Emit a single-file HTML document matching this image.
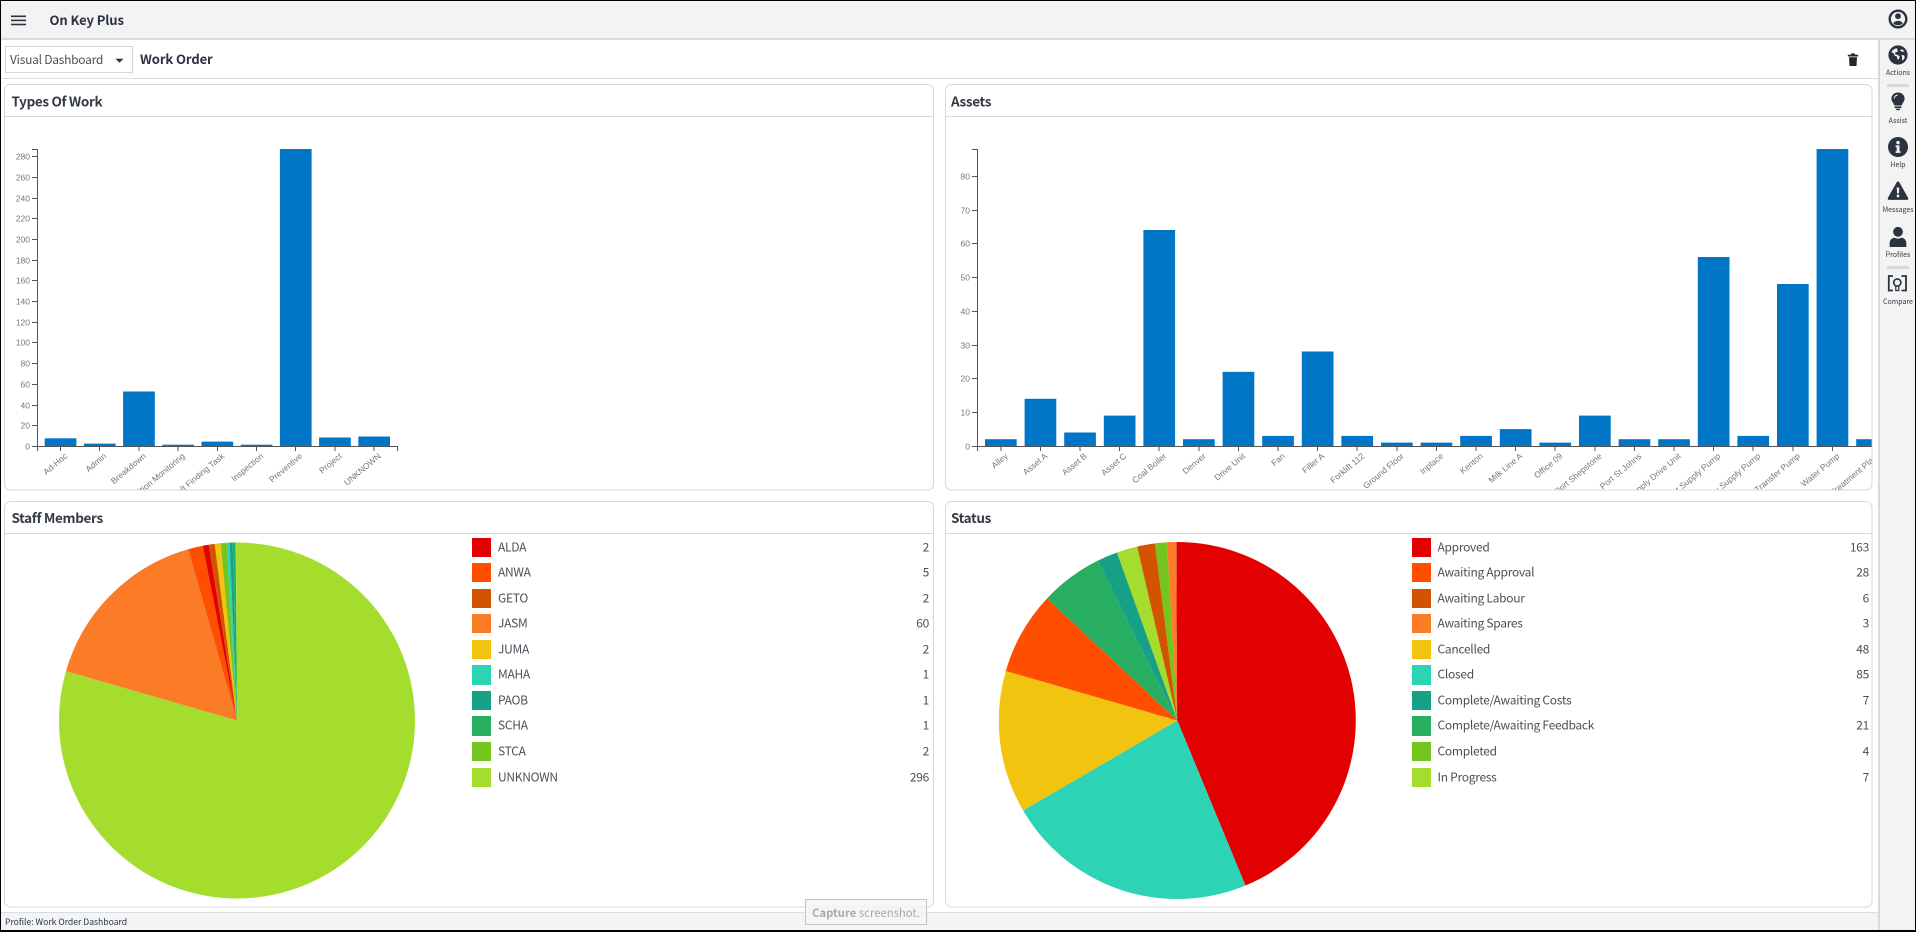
<!DOCTYPE html>
<html lang="en">
<head>
<meta charset="utf-8">
<title>On Key Plus</title>
<style>
html,body{margin:0;padding:0;background:#fff;width:1916px;height:932px;overflow:hidden}
svg{display:block;position:absolute;left:0;top:0}
text{font-family:"Noto Sans CJK JP","Liberation Sans",sans-serif}
.h{font-size:13.5px;font-weight:700;fill:#333a45;letter-spacing:-.35px}
.ax text{font-family:"Liberation Sans",sans-serif;font-size:8.5px;fill:#777}
.yt text{text-anchor:end}
.xl text{text-anchor:end;font-size:8.5px}
.lg text{font-size:12px;fill:#4a4f58;letter-spacing:-.28px;transform:translate(0,-.7px)}
.lg .v{text-anchor:end}
.sb text{font-size:7px;fill:#333a45;text-anchor:middle}
.bar rect{fill:#0276c6}
.axl{stroke:#555;stroke-width:1;fill:none}
.card{fill:#fff;stroke:#d8d8d8;stroke-width:1}
.hl{stroke:#d8d8d8;stroke-width:1}
.pie circle{fill:none}
</style>
</head>
<body>
<svg width="1916" height="932" viewBox="0 0 1916 932" xmlns="http://www.w3.org/2000/svg">
<defs>
<clipPath id="c1"><rect x="5" y="117" width="928" height="372.5"/></clipPath>
<clipPath id="c2"><rect x="946" y="117" width="925.6" height="372.5"/></clipPath>
</defs>

<!-- chrome -->
<rect x="0" y="0" width="1916" height="932" fill="#fff"/>
<rect x="1" y="1" width="1914" height="37" fill="#f3f3f3"/>
<rect x="1878" y="38" width="37" height="892" fill="#f3f3f3"/>
<rect x="1" y="38" width="1914" height="2" fill="#d9d9d9"/>
<rect x="1878" y="38" width="2" height="892" fill="#d9d9d9"/>
<rect x="1" y="78" width="1877" height="1" fill="#dcdcdc"/>
<rect x="1" y="912" width="1877" height="18" fill="#f3f4f6"/>
<rect x="1" y="912" width="1877" height="1" fill="#dcdcdc"/>

<!-- hamburger -->
<rect x="11" y="15.5" width="15" height="1.6" fill="#2b3240"/>
<rect x="11" y="19.6" width="15" height="1.6" fill="#2b3240"/>
<rect x="11" y="23.7" width="15" height="1.6" fill="#2b3240"/>
<text x="49.5" y="25" font-size="13" font-weight="700" fill="#2b3240" letter-spacing="-.1">On Key Plus</text>

<!-- toolbar -->
<rect x="5.5" y="46.5" width="127" height="26" fill="#fff" stroke="#d5d5d5"/>
<text x="10" y="64" font-size="12" fill="#4a4f58" letter-spacing="-.25">Visual Dashboard</text>
<path d="M115.5 58.8h8l-4 4z" fill="#2b3240"/>
<text x="140" y="64" font-size="13" font-weight="700" fill="#2b3240" letter-spacing="-.1">Work Order</text>
<path d="M1847.8 54.8h3l.7-1.4h3l.7 1.4h3v1.7h-10.4zM1849 57.3h8l-.5 8.7h-7z" fill="#20262e"/>

<!-- cards -->
<rect class="card" x="4.5" y="84.5" width="929" height="405.5" rx="6"/>
<rect class="card" x="945.5" y="84.5" width="926.5" height="405.5" rx="6"/>
<rect class="card" x="4.5" y="501.5" width="929" height="405.5" rx="6"/>
<rect class="card" x="945.5" y="501.5" width="926.5" height="405.5" rx="6"/>
<line class="hl" x1="5" y1="116.5" x2="933" y2="116.5"/>
<line class="hl" x1="946" y1="116.5" x2="1872" y2="116.5"/>
<line class="hl" x1="5" y1="533.5" x2="933" y2="533.5"/>
<line class="hl" x1="946" y1="533.5" x2="1872" y2="533.5"/>
<text class="h" x="11.5" y="106.5">Types Of Work</text>
<text class="h" x="951" y="106.5">Assets</text>
<text class="h" x="11.5" y="523">Staff Members</text>
<text class="h" x="951" y="523">Status</text>

<!-- Types chart -->
<g clip-path="url(#c1)">
<g class="bar">
<rect x="44.7" y="438.3" width="31.7" height="7.7"/>
<rect x="83.9" y="443.6" width="31.7" height="2.4"/>
<rect x="123.1" y="391.5" width="31.7" height="54.5"/>
<rect x="162.3" y="444.7" width="31.7" height="1.3"/>
<rect x="201.5" y="441.6" width="31.7" height="4.4"/>
<rect x="240.7" y="444.7" width="31.7" height="1.3"/>
<rect x="279.9" y="149" width="31.7" height="297"/>
<rect x="319.1" y="437.5" width="31.7" height="8.5"/>
<rect x="358.3" y="436.5" width="31.7" height="9.5"/>
</g>
<path class="axl" d="M32 149.5h5.5V446.5H32M37.5 446.5H397.5V451M37.5 446.5V451"/>
<path class="axl" d="M32 156.5h5M32 177.5h5M32 198.5h5M32 218.5h5M32 239.5h5M32 260.5h5M32 280.5h5M32 301.5h5M32 322.5h5M32 342.5h5M32 363.5h5M32 384.5h5M32 405.5h5M32 425.5h5"/>
<path class="axl" d="M60.5 447v4M99.5 447v4M139 447v4M178 447v4M217.5 447v4M256.5 447v4M295.5 447v4M335 447v4M374 447v4"/>
<g class="ax yt">
<text x="30" y="159.5">280</text><text x="30" y="180.5">260</text><text x="30" y="201.5">240</text><text x="30" y="221.5">220</text><text x="30" y="242.5">200</text><text x="30" y="263.5">180</text><text x="30" y="283.5">160</text><text x="30" y="304.5">140</text><text x="30" y="325.5">120</text><text x="30" y="345.5">100</text><text x="30" y="366.5">80</text><text x="30" y="387.5">60</text><text x="30" y="408.5">40</text><text x="30" y="428.5">20</text><text x="30" y="449.5">0</text>
</g>
<g class="ax xl">
<text transform="translate(68,457) rotate(-40)">Ad-Hoc</text>
<text transform="translate(107,457) rotate(-40)">Admin</text>
<text transform="translate(146.5,457) rotate(-40)">Breakdown</text>
<text transform="translate(185.5,457) rotate(-40)">Condition Monitoring</text>
<text transform="translate(225,457) rotate(-40)">Fault Finding Task</text>
<text transform="translate(264,457) rotate(-40)">Inspection</text>
<text transform="translate(303,457) rotate(-40)">Preventive</text>
<text transform="translate(342.5,457) rotate(-40)">Project</text>
<text transform="translate(381.5,457) rotate(-40)">UNKNOWN</text>
</g>
</g>

<!-- Assets chart -->
<g clip-path="url(#c2)">
<g class="bar">
<rect x="985" y="439.2" width="31.7" height="6.8"/>
<rect x="1024.6" y="398.8" width="31.7" height="47.2"/>
<rect x="1064.2" y="432.5" width="31.7" height="13.5"/>
<rect x="1103.8" y="415.6" width="31.7" height="30.4"/>
<rect x="1143.4" y="230" width="31.7" height="216"/>
<rect x="1183" y="439.2" width="31.7" height="6.8"/>
<rect x="1222.6" y="371.8" width="31.7" height="74.2"/>
<rect x="1262.2" y="435.9" width="31.7" height="10.1"/>
<rect x="1301.8" y="351.5" width="31.7" height="94.5"/>
<rect x="1341.4" y="435.9" width="31.7" height="10.1"/>
<rect x="1381" y="442.6" width="31.7" height="3.4"/>
<rect x="1420.6" y="442.6" width="31.7" height="3.4"/>
<rect x="1460.2" y="435.9" width="31.7" height="10.1"/>
<rect x="1499.8" y="429.1" width="31.7" height="16.9"/>
<rect x="1539.4" y="442.6" width="31.7" height="3.4"/>
<rect x="1579" y="415.6" width="31.7" height="30.4"/>
<rect x="1618.6" y="439.2" width="31.7" height="6.8"/>
<rect x="1658.2" y="439.2" width="31.7" height="6.8"/>
<rect x="1697.8" y="257" width="31.7" height="189"/>
<rect x="1737.4" y="435.9" width="31.7" height="10.1"/>
<rect x="1777" y="284" width="31.7" height="162"/>
<rect x="1816.6" y="149" width="31.7" height="297"/>
<rect x="1856.2" y="439.2" width="31.7" height="6.8"/>
</g>
<path class="axl" d="M972 149.5h5.5V446.5H972M977.5 446.5H1880M977.5 446.5V451"/>
<path class="axl" d="M972 176.5h5M972 210.5h5M972 243.5h5M972 277.5h5M972 311.5h5M972 345.5h5M972 378.5h5M972 412.5h5"/>
<path class="axl" d="M1001 447v4M1040.5 447v4M1080 447v4M1119.5 447v4M1159 447v4M1199 447v4M1238.5 447v4M1278 447v4M1317.5 447v4M1357 447v4M1397 447v4M1436.5 447v4M1476 447v4M1515.5 447v4M1555 447v4M1595 447v4M1634.5 447v4M1674 447v4M1713.5 447v4M1753 447v4M1793 447v4M1832.5 447v4"/>
<g class="ax yt">
<text x="970" y="179.5">80</text><text x="970" y="213.5">70</text><text x="970" y="246.5">60</text><text x="970" y="280.5">50</text><text x="970" y="314.5">40</text><text x="970" y="348.5">30</text><text x="970" y="381.5">20</text><text x="970" y="415.5">10</text><text x="970" y="449.5">0</text>
</g>
<g class="ax xl">
<text transform="translate(1008.5,457) rotate(-40)">Alley</text>
<text transform="translate(1048,457) rotate(-40)">Asset A</text>
<text transform="translate(1087.5,457) rotate(-40)">Asset B</text>
<text transform="translate(1127,457) rotate(-40)">Asset C</text>
<text transform="translate(1167,457) rotate(-40)">Coal Boiler</text>
<text transform="translate(1206.5,457) rotate(-40)">Denver</text>
<text transform="translate(1246,457) rotate(-40)">Drive Unit</text>
<text transform="translate(1285.5,457) rotate(-40)">Fan</text>
<text transform="translate(1325,457) rotate(-40)">Filler A</text>
<text transform="translate(1365,457) rotate(-40)">Forklift 112</text>
<text transform="translate(1404.5,457) rotate(-40)">Ground Floor</text>
<text transform="translate(1444,457) rotate(-40)">Inplace</text>
<text transform="translate(1483.5,457) rotate(-40)">Kenton</text>
<text transform="translate(1523,457) rotate(-40)">Milk Line A</text>
<text transform="translate(1563,457) rotate(-40)">Office 09</text>
<text transform="translate(1602.5,457) rotate(-40)">Port Shepstone</text>
<text transform="translate(1642,457) rotate(-40)">Port St Johns</text>
<text transform="translate(1681.5,457) rotate(-40)">Supply Drive Unit</text>
<text transform="translate(1721,457) rotate(-40)">Product Supply Pump</text>
<text transform="translate(1761,457) rotate(-40)">Secondary Supply Pump</text>
<text transform="translate(1800.5,457) rotate(-40)">Transfer Pump</text>
<text transform="translate(1840,457) rotate(-40)">Water Pump</text>
<text transform="translate(1879.5,457) rotate(-40)">Treatment Plant</text>
</g>
</g>

<!-- Staff pie -->
<g class="pie" transform="rotate(-90 237 720.5)" stroke-width="178">
<circle cx="237" cy="720.5" r="89" pathLength="372" stroke="#a5dd2f" stroke-dasharray="296 76" stroke-dashoffset="0"/>
<circle cx="237" cy="720.5" r="89" pathLength="372" stroke="#fc7b27" stroke-dasharray="60 312" stroke-dashoffset="-296"/>
<circle cx="237" cy="720.5" r="89" pathLength="372" stroke="#ff4e00" stroke-dasharray="5 367" stroke-dashoffset="-356"/>
<circle cx="237" cy="720.5" r="89" pathLength="372" stroke="#e30000" stroke-dasharray="2 370" stroke-dashoffset="-361"/>
<circle cx="237" cy="720.5" r="89" pathLength="372" stroke="#d35400" stroke-dasharray="2 370" stroke-dashoffset="-363"/>
<circle cx="237" cy="720.5" r="89" pathLength="372" stroke="#f2c40f" stroke-dasharray="2 370" stroke-dashoffset="-365"/>
<circle cx="237" cy="720.5" r="89" pathLength="372" stroke="#76c51f" stroke-dasharray="2 370" stroke-dashoffset="-367"/>
<circle cx="237" cy="720.5" r="89" pathLength="372" stroke="#2cd3b5" stroke-dasharray="1 371" stroke-dashoffset="-369"/>
<circle cx="237" cy="720.5" r="89" pathLength="372" stroke="#16a085" stroke-dasharray="1 371" stroke-dashoffset="-370"/>
<circle cx="237" cy="720.5" r="89" pathLength="372" stroke="#27ae60" stroke-dasharray="1 371" stroke-dashoffset="-371"/>
</g>

<!-- Status pie -->
<g class="pie" transform="rotate(-90 1177.3 720.5)" stroke-width="178.5">
<circle cx="1177.3" cy="720.5" r="89.25" pathLength="372" stroke="#e30000" stroke-dasharray="163 209" stroke-dashoffset="0"/>
<circle cx="1177.3" cy="720.5" r="89.25" pathLength="372" stroke="#2cd3b5" stroke-dasharray="85 287" stroke-dashoffset="-163"/>
<circle cx="1177.3" cy="720.5" r="89.25" pathLength="372" stroke="#f2c40f" stroke-dasharray="48 324" stroke-dashoffset="-248"/>
<circle cx="1177.3" cy="720.5" r="89.25" pathLength="372" stroke="#ff4e00" stroke-dasharray="28 344" stroke-dashoffset="-296"/>
<circle cx="1177.3" cy="720.5" r="89.25" pathLength="372" stroke="#27ae60" stroke-dasharray="21 351" stroke-dashoffset="-324"/>
<circle cx="1177.3" cy="720.5" r="89.25" pathLength="372" stroke="#16a085" stroke-dasharray="7 365" stroke-dashoffset="-345"/>
<circle cx="1177.3" cy="720.5" r="89.25" pathLength="372" stroke="#a5dd2f" stroke-dasharray="7 365" stroke-dashoffset="-352"/>
<circle cx="1177.3" cy="720.5" r="89.25" pathLength="372" stroke="#d35400" stroke-dasharray="6 366" stroke-dashoffset="-359"/>
<circle cx="1177.3" cy="720.5" r="89.25" pathLength="372" stroke="#76c51f" stroke-dasharray="4 368" stroke-dashoffset="-365"/>
<circle cx="1177.3" cy="720.5" r="89.25" pathLength="372" stroke="#fc7b27" stroke-dasharray="3 369" stroke-dashoffset="-369"/>
</g>

<!-- Staff legend -->
<g class="lg">
<rect x="472" y="538" width="19" height="19" fill="#e30000"/><text x="498" y="552">ALDA</text><text class="v" x="929" y="552">2</text>
<rect x="472" y="563" width="19" height="19" fill="#ff4e00"/><text x="498" y="577">ANWA</text><text class="v" x="929" y="577">5</text>
<rect x="472" y="589" width="19" height="19" fill="#d35400"/><text x="498" y="603">GETO</text><text class="v" x="929" y="603">2</text>
<rect x="472" y="614" width="19" height="19" fill="#fc7b27"/><text x="498" y="628">JASM</text><text class="v" x="929" y="628">60</text>
<rect x="472" y="640" width="19" height="19" fill="#f2c40f"/><text x="498" y="654">JUMA</text><text class="v" x="929" y="654">2</text>
<rect x="472" y="665" width="19" height="20" fill="#2cd3b5"/><text x="498" y="679">MAHA</text><text class="v" x="929" y="679">1</text>
<rect x="472" y="691" width="19" height="19" fill="#16a085"/><text x="498" y="705">PAOB</text><text class="v" x="929" y="705">1</text>
<rect x="472" y="716" width="19" height="20" fill="#27ae60"/><text x="498" y="730">SCHA</text><text class="v" x="929" y="730">1</text>
<rect x="472" y="742" width="19" height="19" fill="#76c51f"/><text x="498" y="756">STCA</text><text class="v" x="929" y="756">2</text>
<rect x="472" y="768" width="19" height="19" fill="#a5dd2f"/><text x="498" y="782">UNKNOWN</text><text class="v" x="929" y="782">296</text>
</g>

<!-- Status legend -->
<g class="lg">
<rect x="1412" y="538" width="19" height="19" fill="#e30000"/><text x="1437.5" y="552">Approved</text><text class="v" x="1869" y="552">163</text>
<rect x="1412" y="563" width="19" height="19" fill="#ff4e00"/><text x="1437.5" y="577">Awaiting Approval</text><text class="v" x="1869" y="577">28</text>
<rect x="1412" y="589" width="19" height="19" fill="#d35400"/><text x="1437.5" y="603">Awaiting Labour</text><text class="v" x="1869" y="603">6</text>
<rect x="1412" y="614" width="19" height="19" fill="#fc7b27"/><text x="1437.5" y="628">Awaiting Spares</text><text class="v" x="1869" y="628">3</text>
<rect x="1412" y="640" width="19" height="19" fill="#f2c40f"/><text x="1437.5" y="654">Cancelled</text><text class="v" x="1869" y="654">48</text>
<rect x="1412" y="665" width="19" height="20" fill="#2cd3b5"/><text x="1437.5" y="679">Closed</text><text class="v" x="1869" y="679">85</text>
<rect x="1412" y="691" width="19" height="19" fill="#16a085"/><text x="1437.5" y="705">Complete/Awaiting Costs</text><text class="v" x="1869" y="705">7</text>
<rect x="1412" y="716" width="19" height="20" fill="#27ae60"/><text x="1437.5" y="730">Complete/Awaiting Feedback</text><text class="v" x="1869" y="730">21</text>
<rect x="1412" y="742" width="19" height="19" fill="#76c51f"/><text x="1437.5" y="756">Completed</text><text class="v" x="1869" y="756">4</text>
<rect x="1412" y="768" width="19" height="19" fill="#a5dd2f"/><text x="1437.5" y="782">In Progress</text><text class="v" x="1869" y="782">7</text>
</g>

<!-- status bar -->
<text x="5" y="925" font-size="8.6" fill="#2b3240">Profile: Work Order Dashboard</text>

<!-- capture tooltip -->
<rect x="805.5" y="899.5" width="121" height="25" fill="#f3f4f6" fill-opacity=".85" stroke="#c4c4c4"/>
<text x="812" y="917" font-size="11.3" fill="#a9a9a9"><tspan font-weight="700">Capture</tspan> screenshot.</text>

<!-- sidebar icons -->
<g fill="#2b3240">
<!-- user -->
<circle cx="1898" cy="19" r="8.3" fill="none" stroke="#2b3240" stroke-width="2.4"/>
<circle cx="1898" cy="16.2" r="2.9"/>
<path d="M1893.2 23.4c.9-1.8 2.7-2.5 4.8-2.5s3.9.7 4.8 2.5c-1.3 1.2-3 1.9-4.8 1.9s-3.5-.7-4.8-1.9z"/>
<!-- globe -->
<circle cx="1898" cy="55" r="9.6"/>
<path d="M1897 48.3c-2.3.2-4.6 1.7-5.6 3.8l2.6 1.5.4 2 2.4.8.4 2.4 1.4.9 1.2-3.2-2.4-1.8-2.2-.2.2-2.4 2.4-.4zM1900 50.4l2 1.4 2.5-.2c-.6-1-1.7-1.9-2.9-2.4zM1901.5 55l2.6.4.6 2.2c-.6 1.4-1.5 2.4-2.7 3.2l.2-3z" fill="#f3f3f3"/>
<rect x="1887" y="84" width="22" height="3" fill="#d9d9d9"/>
<!-- bulb -->
<path d="M1898 92.5c-3.9 0-6.6 2.8-6.6 6.1 0 2.8 2.2 4.2 2.9 6.9h7.4c.7-2.7 2.9-4.1 2.9-6.9 0-3.3-2.7-6.1-6.6-6.1z"/>
<path d="M1894.6 106.4h6.8v1.6h-6.8zM1895.6 108.6h4.8l-1 1.6h-2.8z"/>
<path d="M1894.2 98.5c0-1.9 1.6-3.3 3.5-3.5" fill="none" stroke="#f3f3f3" stroke-width="1"/>
<!-- info -->
<circle cx="1898" cy="147" r="10"/>
<circle cx="1898" cy="142.6" r="1.7" fill="#f3f3f3"/>
<path d="M1895.6 145.4h3.9v5.8h1.1v1.7h-5v-1.7h1.1v-4.1h-1.1z" fill="#f3f3f3"/>
<!-- warning -->
<path d="M1898 181.5c.6 0 1 .3 1.3.8l8.8 15.6c.5.9-.1 2-1.3 2h-17.6c-1.2 0-1.8-1.1-1.3-2l8.8-15.6c.3-.5.7-.8 1.3-.8z"/>
<path d="M1896.7 187.5h2.6l-.4 6h-1.8z" fill="#f3f3f3"/>
<circle cx="1898" cy="196" r="1.4" fill="#f3f3f3"/>
<!-- person -->
<circle cx="1898" cy="231.8" r="4.9"/>
<path d="M1889.6 246.4v-3c0-3.6 2.6-5.6 5-5.6.9.5 2.1.8 3.4.8s2.5-.3 3.4-.8c2.4 0 5 2 5 5.6v3c0 .4-.3.6-.6.6h-15.6c-.3 0-.6-.2-.6-.6z"/>
<rect x="1887" y="266" width="22" height="3" fill="#d9d9d9"/>
<!-- compare -->
<path d="M1893 276h-4.2v14.5h4.2M1901.5 276h4.5v14.5h-4.5" fill="none" stroke="#2b3240" stroke-width="1.8"/>
<circle cx="1897.3" cy="282.5" r="3.6" fill="none" stroke="#2b3240" stroke-width="1.6"/>
<path d="M1895.8 286v4.5h3v-4.5" fill="none" stroke="#2b3240" stroke-width="1.2"/>
</g>
<g class="sb">
<text x="1898" y="75">Actions</text>
<text x="1898" y="123">Assist</text>
<text x="1898" y="167">Help</text>
<text x="1898" y="212">Messages</text>
<text x="1898" y="257">Profiles</text>
<text x="1898" y="304">Compare</text>
</g>

<!-- outer black border -->
<rect x="0" y="0" width="1916" height="1" fill="#000"/>
<rect x="0" y="0" width="1" height="932" fill="#000"/>
<rect x="1915" y="0" width="1" height="932" fill="#000"/>
<rect x="0" y="930" width="1916" height="2" fill="#000"/>
</svg>
</body>
</html>
